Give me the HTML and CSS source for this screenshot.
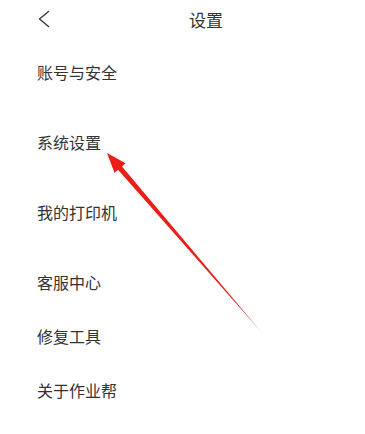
FILE: index.html
```html
<!DOCTYPE html>
<html lang="zh-CN">
<head>
    <meta charset="UTF-8">
    <meta name="viewport" content="width=device-width, initial-scale=1.0">
    <title>设置</title>
    <link rel="stylesheet" href="styles.css">
</head>
<body>
<div class="page">
    <div class="header">
        <span class="back-btn">
            <svg width="14" height="18" viewBox="0 0 14 18"><path d="M11.5 1.5 L2.5 9 L11.5 16.5" fill="none" stroke="#3a3a3a" stroke-width="1.5" stroke-linecap="round" stroke-linejoin="round"/></svg>
        </span>
        <div class="title">设置</div>
    </div>

    <div class="menu">
        <div class="menu-row first">账号与安全</div>
        <div class="menu-row">系统设置</div>
        <div class="menu-row">我的打印机</div>
        <div class="menu-row">客服中心</div>
        <div class="menu-row tight">修复工具</div>
        <div class="menu-row tight">关于作业帮</div>
    </div>

    <!-- annotation arrow drawn over the list -->
    <svg class="pointer" width="365" height="434" viewBox="0 0 365 434">
        <defs>
            <linearGradient id="fade" x1="107" y1="153" x2="263" y2="334" gradientUnits="userSpaceOnUse">
                <stop offset="0" stop-color="#ee1c16"/>
                <stop offset="0.8" stop-color="#e5221c"/>
                <stop offset="1" stop-color="#b08a8a"/>
            </linearGradient>
        </defs>
        <polygon points="107,153 125.5,163.2 122,166.6 263,334 118,169.8 114.5,172.8" fill="url(#fade)"/>
    </svg>
</div>
</body>
</html>
```

FILE: styles.css
```css
/* settings page */
body { margin: 0; background: #fff; font-family: "Noto Sans CJK SC", "Noto Sans", sans-serif; color: #333; }
.page { position: relative; width: 365px; height: 434px; overflow: hidden; }
.header { display: flex; align-items: center; height: 38px; padding-left: 37px; }
.back-btn { display: flex; align-items: center; width: 14px; height: 18px; }
.title { flex: 1; text-align: center; font-size: 17px; color: #333; padding-right: 4px; }
.menu { display: flex; flex-direction: column; padding-left: 37px; }
.menu-row { font-size: 16px; line-height: 22px; margin-top: 48px; }
.menu-row.first { margin-top: 23px; }
.menu-row.tight { margin-top: 32px; }
.pointer { position: absolute; top: 0; left: 0; pointer-events: none; }
```
